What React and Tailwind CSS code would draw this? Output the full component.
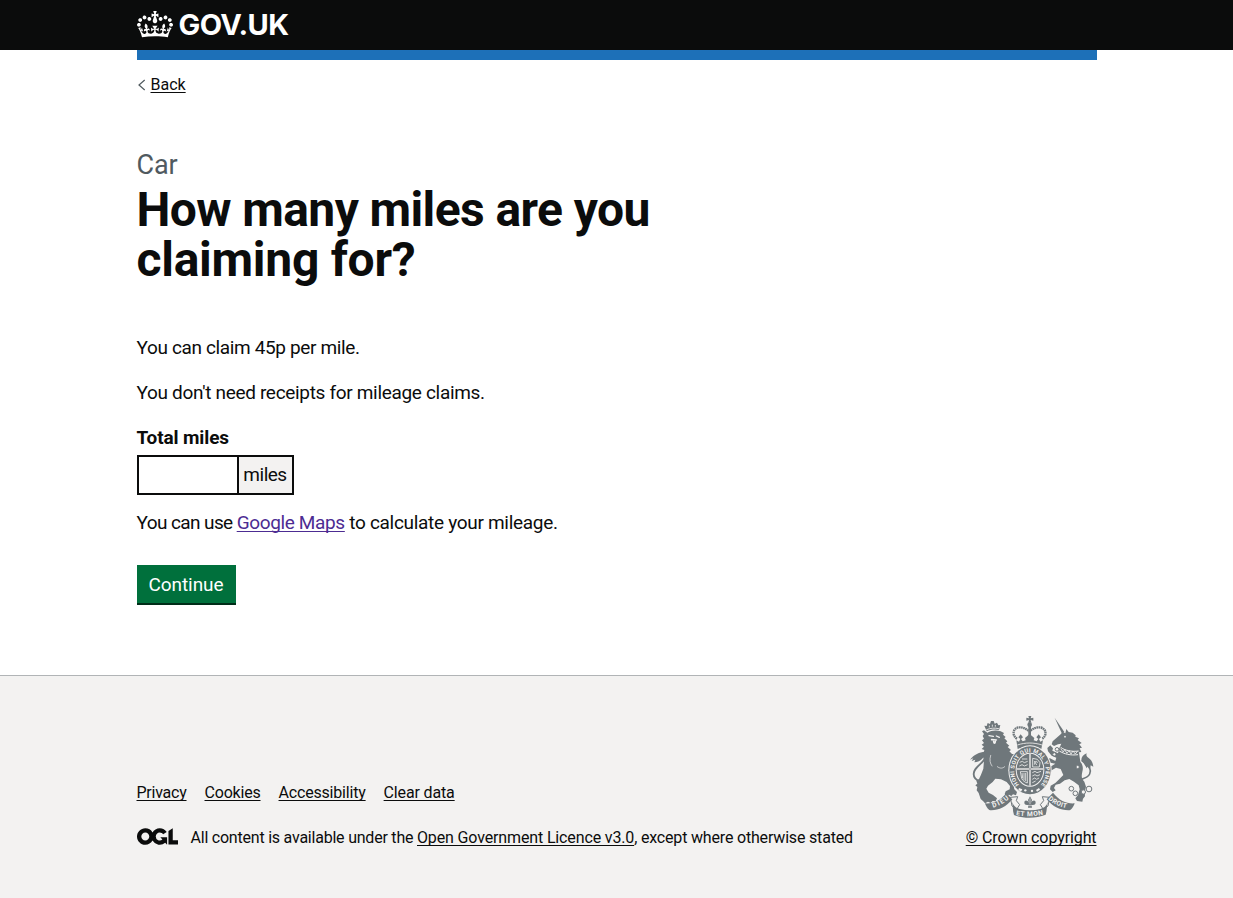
const LINK =
  "underline decoration-1 underline-offset-2 [text-decoration-skip-ink:none]";

const footerLinks = [
  { label: "Privacy", tracking: "tracking-[-0.24px]" },
  { label: "Cookies", tracking: "tracking-[-0.2px]" },
  { label: "Accessibility", tracking: "tracking-[-0.19px]" },
  { label: "Clear data", tracking: "tracking-[-0.15px]" },
];

function CrownLogo() {
  return (
    <svg viewBox="0 0 132 97" className="h-[26.5px] w-9 shrink-0" fill="currentColor" aria-hidden="true">
      <path d="M25 30.2c3.5 1.5 7.7-.2 9.1-3.7 1.5-3.6-.2-7.8-3.9-9.2-3.6-1.4-7.6.3-9.1 3.9-1.4 3.5.3 7.5 3.9 9zM9 39.5c3.6 1.5 7.8-.2 9.2-3.7 1.5-3.6-.2-7.8-3.9-9.1-3.6-1.5-7.6.2-9.1 3.8-1.4 3.5.3 7.5 3.8 9zM4.4 57.2c3.5 1.5 7.7-.2 9.1-3.8 1.5-3.6-.2-7.7-3.9-9.1-3.5-1.5-7.6.3-9.1 3.8-1.4 3.5.3 7.6 3.9 9.1zm38.3-21.4c3.5 1.5 7.7-.2 9.1-3.8 1.5-3.6-.2-7.7-3.9-9.1-3.6-1.5-7.6.3-9.1 3.8-1.3 3.6.4 7.7 3.9 9.1zm64.4-5.6c-3.6 1.5-7.8-.2-9.1-3.7-1.5-3.6.2-7.8 3.8-9.2 3.6-1.4 7.7.3 9.2 3.9 1.3 3.5-.4 7.5-3.9 9zm15.9 9.3c-3.6 1.5-7.7-.2-9.1-3.7-1.5-3.6.2-7.8 3.7-9.1 3.6-1.5 7.7.2 9.2 3.8 1.5 3.5-.3 7.5-3.8 9zm4.7 17.7c-3.6 1.5-7.8-.2-9.2-3.8-1.5-3.6.2-7.7 3.9-9.1 3.6-1.5 7.7.3 9.2 3.8 1.3 3.5-.4 7.6-3.9 9.1zM89.3 35.8c-3.6 1.5-7.8-.2-9.2-3.8-1.4-3.6.2-7.7 3.9-9.1 3.6-1.5 7.7.3 9.2 3.8 1.4 3.6-.3 7.7-3.9 9.1zM69.7 17.7l8.9 4.7V9.3l-8.9 2.8c-.2-.3-.5-.6-.9-.9L72.4 0H59.6l3.5 11.2c-.3.3-.6.5-.9.9l-8.8-2.8v13.1l8.8-4.7c.3.3.6.7.9.9l-5 15.4v.1c-.2.8-.4 1.6-.4 2.4 0 4.1 3.1 7.5 7 8.1h.2c.3 0 .7.1 1 .1.4 0 .7 0 1-.1h.2c4-.6 7.1-4.1 7.1-8.1 0-.8-.1-1.7-.4-2.4V34l-5.1-15.4c.4-.2.7-.6 1-.9zM66 92.8c16.9 0 32.8 1.1 47.1 3.2 4-16.9 8.9-26.7 14-33.5l-9.6-3.4c1 4.9 1.1 7.2 0 10.2-1.5-1.4-3-4.3-4.2-8.7L108.6 76c2.8-2 5-3.2 7.5-3.3-4.4 9.4-10 11.9-13.6 11.2-4.3-.8-6.3-4.6-5.6-7.9 1-4.7 5.7-5.9 8-.5 4.3-8.7-3-11.4-7.6-8.8 7.1-7.2 7.9-13.5 2.1-21.1-8 6.1-8.1 12.3-4.5 20.8-4.7-5.4-12.1-2.5-9.5 6.2 3.4-5.2 7.9-2 7.2 3.1-.6 4.3-6.4 7.8-13.5 7.2-10.3-.9-10.9-8-11.2-13.8 2.5-.5 7.1 1.8 11 7.3L80.2 60c-4.1 4.4-8 5.3-12.3 5.4 1.4-4.4 8-11.6 8-11.6H55.5s6.4 7.2 7.9 11.6c-4.2-.1-8-1-12.3-5.4l1.4 16.4c3.9-5.5 8.5-7.7 10.9-7.3-.3 5.8-.9 12.8-11.1 13.8-7.2.6-12.9-2.9-13.5-7.2-.7-5 3.8-8.3 7.1-3.1 2.7-8.7-4.6-11.6-9.4-6.2 3.7-8.5 3.6-14.7-4.6-20.8-5.8 7.6-5 13.9 2.2 21.1-4.7-2.6-11.9.1-7.7 8.8 2.3-5.5 7.1-4.2 8.1.5.7 3.3-1.3 7.1-5.7 7.9-3.5.7-9-1.8-13.5-11.2 2.5.1 4.7 1.3 7.5 3.3l-4.7-15.4c-1.2 4.4-2.7 7.2-4.3 8.7-1.1-3-.9-5.3 0-10.2l-9.5 3.4c5 6.9 9.9 16.7 14 33.6 14.8-2.1 30.8-3.2 47.7-3.2z" />
    </svg>
  );
}

function OglLogo() {
  return (
    <svg viewBox="0 0 483.2 195.7" className="h-[17px] w-[41px] shrink-0" fill="currentColor" aria-hidden="true">
      <path d="M421.5 142.8V.1l-50.7 32.3v161.1h112.4v-50.7zm-122.3-9.6A47.12 47.12 0 0 1 221 97.8c0-26 21.1-47.1 47.1-47.1 16.7 0 31.4 8.7 39.7 21.8l42.7-27.2A97.63 97.63 0 0 0 268.1 0c-36.5 0-68.3 20.1-85.1 49.7A98 98 0 0 0 97.8 0C43.9 0 0 43.9 0 97.8s43.9 97.8 97.8 97.8c36.5 0 68.3-20.1 85.1-49.7a97.76 97.76 0 0 0 149.6 25.4l19.4 22.2h3v-87.8h-80l24.3 27.5zM97.8 145c-26 0-47.1-21.1-47.1-47.1s21.1-47.1 47.1-47.1 47.1 21.1 47.1 47.1S123.8 145 97.8 145" />
    </svg>
  );
}

function RoyalArms() {
  const ink = "#6f777b";
  const paper = "#f3f2f1";
  return (
    <svg viewBox="27 24 375 306" className="h-[102px] w-[125px]" aria-hidden="true">
      {/* Lion */}
      <g fill={ink}>
        <path d="M80 70l-7-17 7 1 3-9 7 3 3-9h8l3 8 7-3 4 8 6-1-4 15c-12-3-25-2-37 4z" />
        <path d="M82 74c12-7 28-8 40-4l10 5-3 5 8 7-4 4 9 9-4 4 10 9-5 4 10 9-5 4 8 8 17 0-7 7 7 5-8 5 4 8-13 3-5 8 1 18 10 20 3 16c-2 8-4 10-2 16l8 8-3 10-9-3-5 5-7-4-8 5-5-7 3-8 12-6 1-10-10-12-17-8-17-2-8 10-14 11-5 9 7 12 13 7 12 10-4 9-9-1-6 6-8-4-9 5-6-7-7-6-6-18-6-8 2-10-6-5 6-5-3-9 8-5 6-13 7-18 2-24-3-16 4-16-8-3 7-7-7-6 7-5-6-8 6-5-4-8 4-6-6-8 6-3z" />
        <path d="M68 151c10-8 12-14 6-20-15 1-32 8-44 24l10-4-5 8 11-4-3 8c9 0 19-4 25-12z" />
        <path d="M72 132c10 12 2 24-10 35-12 11-21 19-21 31 0 12 9 19 20 22" fill="none" stroke={ink} strokeWidth="5.5" />
      </g>
      <g fill="none" stroke={paper} strokeLinecap="round">
        <path d="M80 65c11-5 24-6 36-3M88 54v3M97 51v4M106 52v3" strokeWidth="2.5" />
        <path d="M87 83l13 2M109 84l9 4" strokeWidth="4" />
        <path d="M95 95l14 1M101 101c1 6 4 6 5 0" strokeWidth="5" />
        <path d="M112 176c8 6 16 6 22 0M92 142c-4 14-2 24 4 32" strokeWidth="2" />
      </g>

      {/* Unicorn */}
      <g fill={ink}>
        <path d="M284 29l29 43-7 5z" />
        <path d="M302 79l6-7 8 4 3-13 7 9 12 2 9 8-1 4 11 5-4 5 12 9-7 4 8 10-7 2 5 11-7 1 2 14 2 14c8 10 9 20 6 30-3 14-3 20 6 30l5 15-4 16 1 13-6 7-2 9-16-2-5-8 8-10 5-17-3-12-14-11-14-8-14 4-14 10-13 3-5 10 5 7-9 5-8-8 2-11 14-8 10-10 14-14-8-18-14-4-13 8-3 8-9-4 7-14 16-10-14-3-12 7-9-4 4-12 15-4 16 8 3-10-14-6-11-13-2-10 9-8 8 9-2 7 17 8 4-16 6-13-10 2-12 5-7-5 3-9z" />
        <path d="M364 160c-1-12 5-19 16-24-2 6 0 10 6 14 8 6 13 14 14 26l-8-4-1 8-8-5-3 6c-4-8-8-16-16-21z" />
        <path d="M376 168c14 9 18 20 13 30-6 12-20 14-33 19" fill="none" stroke={ink} strokeWidth="5" />
      </g>
      <path d="M302 118c12 9 33 14 54 11M298 129c14 9 34 14 56 11" fill="none" stroke={paper} strokeWidth="3" />
      <path d="M302 122l8 10 4-7 7 11 6-8 6 10 6-9 7 9 6-8" fill="none" stroke={paper} strokeWidth="2.5" />
      <circle cx="315" cy="86" r="2.5" fill={paper} />
      <g fill={paper} stroke={ink} strokeWidth="3">
        <circle cx="291" cy="124" r="5.5" />
        <circle cx="283" cy="139" r="5" />
        <circle cx="353" cy="177" r="5" />
        <circle cx="334" cy="242" r="7" />
        <circle cx="346" cy="256" r="7" />
        <circle cx="370" cy="252" r="6.5" />
        <circle cx="387" cy="243" r="8.5" />
      </g>

      {/* Crown */}
      <path d="M171 92c-16-10-13-31 6-34 14-1 23 6 31 12 9-6 18-13 32-12 19 3 22 24 7 34" fill="none" stroke={ink} strokeWidth="7" strokeDasharray="5 1.5" />
      <g fill={ink}>
        <path d="M205 24h9l-2 7 8-2v9l-8-2 2 8h-9l2-8-8 2v-9l8 2z" />
        <circle cx="209" cy="50" r="7" />
        <path d="M205 54h8v34h-8z" />
        <path d="M169 97l8 4 4-8-6-5 7-9 7 9-6 5 5 7 9-3-2-7 14-12 14 12-2 7 9 3 5-7-6-5 7-9 7 9-6 5 4 8 8-4-5 26c-23-8-48-8-71 0z" />
      </g>
      <path d="M172 111c24-8 50-8 74 0" fill="none" stroke={paper} strokeWidth="2.5" />

      {/* Garter and shield */}
      <ellipse cx="210" cy="187" rx="65" ry="75" fill={paper} />
      <ellipse cx="210" cy="187" rx="62" ry="72" fill={ink} />
      <ellipse cx="210" cy="185" rx="43" ry="51" fill={paper} />
      <ellipse cx="210" cy="185" rx="40" ry="48" fill={ink} />
      <path d="M210 137v96M170 183h80" stroke={paper} strokeWidth="6" />
      <path d="M210 137v96M170 183h80" stroke={ink} strokeWidth="2" />
      <g fill="none" stroke={paper} strokeWidth="2.4">
        <path d="M186 153h16M179 163l8-3 6 4 10-4M178 174l8-4 7 4 10-4M218 151l14 3 8 10-2 13h-20zM223 170c0-10 8-14 9-5M223 159l7 12" />
        <path d="M181 191l4 20c3 8 11 12 17 14v-34zM186 195l2 16M192 195v22M197 195v24" />
        <path d="M217 194l8-4 6 4 12-4M217 204l8-4 6 4 9-4M217 214l7-4 6 4 7-4M217 224l10-5" />
      </g>
      <defs>
        <path id="garter" d="M177 230A47 57 0 1 1 243 230" />
        <path id="scrollLeft" d="M99 299Q126 292 150 269" />
        <path id="scrollMid" d="M168 321Q210 329 254 319" />
        <path id="scrollRight" d="M264 274Q288 296 328 302" />
      </defs>
      <text fill={paper} fontSize="17" fontWeight="700" fontFamily="Roboto, sans-serif">
        <textPath href="#garter" textLength="252">HONI SOIT QUI MAL Y PENSE</textPath>
      </text>
      <g fill={paper}>
        <circle cx="196" cy="247" r="3.5" />
        <circle cx="216" cy="249" r="3.5" />
        <path d="M177 240l10 4-4 7-8-5zM228 246l9-6 3 5-9 6z" />
      </g>

      {/* Motto scroll */}
      <path d="M151 268l22-2-4 12 10 12-9 14-14-10zM269 268l-22-2 4 12-10 12 9 14 14-10z" fill={paper} stroke={ink} strokeWidth="3" />
      <g fill={ink}>
        <path d="M75 286c23 2 46-8 65-32 5 8 11 14 17 20-18 23-42 34-66 33-8-2-13-12-16-21z" />
        <path d="M344 286c-23 2-46-8-65-32l-19 20c18 23 44 34 68 33 8-2 13-12 16-21z" />
        <path d="M156 282c4 13 1 24 6 39 29 11 66 11 95-1 5-14 2-25 7-38-5 12-12 18-23 21-20 5-42 5-62 0-11-3-18-9-23-21z" />
        <path d="M210 265l6 11-3 9c5-10 14-9 14-1 0 6-7 8-12 6l1 9h-12l1-9c-5 2-12 0-12-6 0-8 9-9 14 1l-3-9z" />
      </g>
      <path d="M210 271v18M202 293h16" stroke={paper} strokeWidth="2" />
      <g fill={paper} fontFamily="Roboto, sans-serif" fontWeight="700">
        <text fontSize="20"><textPath href="#scrollLeft" textLength="56">DIEU</textPath></text>
        <text fontSize="20"><textPath href="#scrollMid" textLength="82">ET MON</textPath></text>
        <text fontSize="20"><textPath href="#scrollRight" textLength="62">DROIT</textPath></text>
      </g>
    </svg>
  );
}

function Header() {
  return (
    <header className="h-[50px] bg-[#0b0c0c] text-white">
      <div className="mx-auto flex h-full w-[960px] items-start pt-[11px]">
        <a href="#" className="flex items-start gap-[6px]">
          <CrownLogo />
          <span className="mt-[-1px] font-[Inter,sans-serif] text-[29px] leading-[30px] font-bold tracking-[-0.6px]">
            GOV.UK
          </span>
        </a>
      </div>
    </header>
  );
}

function Footer() {
  return (
    <footer className="h-[223px] border-t border-[#b1b4b6] bg-[#f3f2f1] text-base leading-5">
      <div className="mx-auto flex h-[172px] w-[960px] items-end justify-between">
        <div>
          <ul className="mb-[25px] flex gap-[18px]">
            {footerLinks.map(({ label, tracking }) => (
              <li key={label}>
                <a href="#" className={`${LINK} ${tracking}`}>{label}</a>
              </li>
            ))}
          </ul>
          <div className="flex gap-[13px]">
            <OglLogo />
            <p className="whitespace-nowrap tracking-[-0.22px]">
              All content is available under the{" "}
              <a href="#" className={`${LINK} tracking-[-0.14px]`}>Open Government Licence v3.0</a>
              <span className="tracking-[-0.18px]">, except where otherwise stated</span>
            </p>
          </div>
        </div>
        <a href="#" className="flex flex-col items-end gap-[10px]">
          <span className="pr-[3px]"><RoyalArms /></span>
          <span className={`${LINK} tracking-[-0.1px]`}>© Crown copyright</span>
        </a>
      </div>
    </footer>
  );
}

export default function App() {
  return (
    <div className="flex h-[898px] flex-col bg-white font-[Roboto,sans-serif] text-[#0b0c0c]">
      <Header />
      <div className="mx-auto h-[10px] w-[960px] bg-[#1d70b8]" />
      <div className="mx-auto w-[960px] flex-1 pt-[15px]">
        <a href="#" className="flex w-fit items-center text-base leading-5">
          <svg viewBox="0 0 14 20" className="h-5 w-[14px]" fill="none" stroke="#505a5f" strokeWidth="1.2" aria-hidden="true">
            <path d="M7.7 5L2 10l5.7 5" />
          </svg>
          <span className={LINK}>Back</span>
        </a>
        <main className="pt-[55px] text-[19px] leading-[25px] tracking-[-0.36px]">
          <span className="block pb-[5px] text-[27px] leading-[30px] tracking-[-0.1px] text-[#505a5f]">Car</span>
          <h1 className="mb-[50px] text-[48px] leading-[50px] font-bold tracking-[-0.6px]">
            How many miles are you
            <br />
            <span className="tracking-[-0.27px]">claiming for?</span>
          </h1>
          <p className="mb-5">You can claim 45p per mile.</p>
          <p className="mb-5 tracking-[-0.32px]">You don't need receipts for mileage claims.</p>
          <label htmlFor="miles" className="mb-[5px] block font-bold tracking-[-0.12px]">Total miles</label>
          <div className="mb-[15px] flex">
            <input id="miles" type="text" className="h-10 w-[102px] border-2 border-[#0b0c0c] bg-white px-1 outline-none" />
            <span className="-ml-[2px] flex h-10 w-[57px] items-center justify-center border-2 border-[#0b0c0c] bg-[#f3f2f1] pb-[2px] tracking-[-0.5px]">
              miles
            </span>
          </div>
          <p className="mb-[30px]">
            <span className="tracking-[-0.6px]">You can use </span>
            <a href="#" className={`${LINK} text-[#4c2c92]`}>Google Maps</a>
            <span className="tracking-[-0.3px]"> to calculate your mileage.</span>
          </p>
          <button
            type="button"
            className="block h-[38px] w-[99px] bg-[#00703c] tracking-[-0.08px] text-white shadow-[0_2px_0_#002d18]"
          >
            Continue
          </button>
        </main>
      </div>
      <Footer />
    </div>
  );
}
